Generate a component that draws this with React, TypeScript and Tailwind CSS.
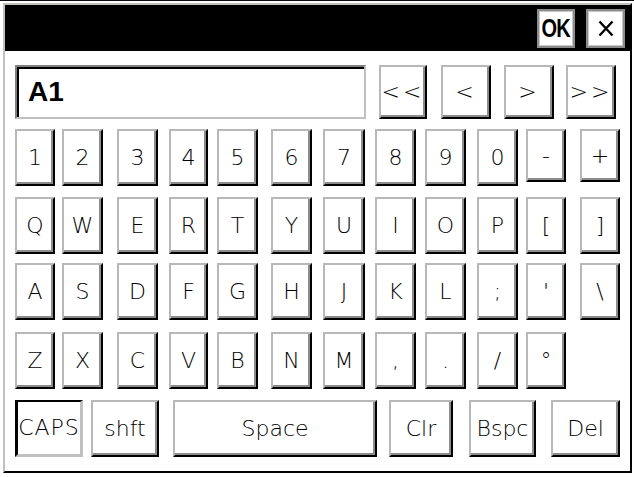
import React from "react";

const KEY_FONT = "font-['DejaVu_Sans',sans-serif] font-extralight text-[22px] leading-none text-black";

const RAISED =
  "flex items-center justify-center bg-white border-2 border-t-[#b8b8b8] border-l-[#b8b8b8] border-r-black border-b-black shadow-[inset_-2px_-2px_0_#8c8c8c]";

const PRESSED =
  "flex items-center justify-center bg-white border-t-2 border-l-[3px] border-b-[3px] border-r-[3px] border-t-black border-l-black border-b-[#c0c0c0] border-r-[#c0c0c0]";

const COLS = [
  { ml: "ml-0", w: "w-[40px]" },
  { ml: "ml-[7px]", w: "w-[41px]" },
  { ml: "ml-[14px]", w: "w-[41px]" },
  { ml: "ml-[11px]", w: "w-[39px]" },
  { ml: "ml-[9px]", w: "w-[41px]" },
  { ml: "ml-[13px]", w: "w-[41px]" },
  { ml: "ml-[11px]", w: "w-[42px]" },
  { ml: "ml-[10px]", w: "w-[41px]" },
  { ml: "ml-[9px]", w: "w-[41px]" },
  { ml: "ml-[11px]", w: "w-[41px]" },
  { ml: "ml-[8px]", w: "w-[40px]" },
  { ml: "ml-[14px]", w: "w-[40px]" },
];

const ROWS: { labels: string[]; mt: string }[] = [
  { labels: ["1", "2", "3", "4", "5", "6", "7", "8", "9", "0", "-", "+"], mt: "mt-[10px]" },
  { labels: ["Q", "W", "E", "R", "T", "Y", "U", "I", "O", "P", "[", "]"], mt: "mt-[11px]" },
  { labels: ["A", "S", "D", "F", "G", "H", "J", "K", "L", ";", "'", "\\"], mt: "mt-[9px]" },
  { labels: ["Z", "X", "C", "V", "B", "N", "M", ",", ".", "/", "°"], mt: "mt-[12px]" },
];

const NAV = [
  { label: "<<", ml: "ml-[13px]", w: "w-[48px]" },
  { label: "<", ml: "ml-[14px]", w: "w-[50px]" },
  { label: ">", ml: "ml-[13px]", w: "w-[50px]" },
  { label: ">>", ml: "ml-[12px]", w: "w-[50px]" },
];

const BOTTOM = [
  { label: "CAPS", ml: "ml-0", w: "w-[68px]", pressed: true },
  { label: "shft", ml: "ml-[8px]", w: "w-[68px]", pressed: false },
  { label: "Space", ml: "ml-[14px]", w: "w-[204px]", pressed: false },
  { label: "Clr", ml: "ml-[12px]", w: "w-[64px]", pressed: false },
  { label: "Bspc", ml: "ml-[16px]", w: "w-[67px]", pressed: false },
  { label: "Del", ml: "ml-[15px]", w: "w-[69px]", pressed: false },
];

export default function App() {
  return (
    <div className="w-[634px] h-[477px] bg-white border-t border-t-[#0d0d1a] pl-[3px] pt-[2px] pr-[2px] pb-[4px] flex">
      <div className="flex-1 flex flex-col border-t-2 border-l-2 border-t-[#c0c0c0] border-l-[#c0c0c0] border-r-2 border-b-2 border-r-black border-b-black">
        {/* Title bar */}
        <div className="h-[46px] bg-black flex items-center justify-end pr-[5px]">
          <div className="w-[38px] h-[39px] bg-white border-2 border-[#8c8c8c] shadow-[inset_0_0_0_1px_#c8c8c8] flex items-center justify-center">
            <span className="font-['Liberation_Sans',sans-serif] font-bold text-[25px] leading-none text-black scale-x-[0.8] tracking-[-1px]">OK</span>
          </div>
          <div className="ml-[11px] w-[39px] h-[39px] bg-white border-2 border-[#8c8c8c] shadow-[inset_0_0_0_1px_#c8c8c8] flex items-center justify-center">
            <svg width="16" height="17" viewBox="0 0 16 17">
              <path d="M1.5 1.5 L14.5 15.5 M14.5 1.5 L1.5 15.5" stroke="#000" strokeWidth="2.4" fill="none" />
            </svg>
          </div>
        </div>

        {/* Body */}
        <div className="flex-1 bg-white pl-[10px] flex flex-col">
          {/* Input + nav */}
          <div className="mt-[14px] flex h-[54px]">
            <div className="w-[351px] h-[54px] border-2 border-t-[#808080] border-l-[#808080] border-b-[#c0c0c0] border-r-[#c0c0c0] shadow-[inset_2px_2px_0_#000] flex items-center pl-[11px]">
              <span className="font-['Liberation_Sans',sans-serif] font-bold text-[28px] leading-none text-black">A1</span>
            </div>
            {NAV.map((n) => (
              <div key={n.label} className={`${n.ml} ${n.w} h-[54px] ${RAISED}`}>
                <span className={`${KEY_FONT} tracking-[3px]`}>{n.label}</span>
              </div>
            ))}
          </div>

          {ROWS.map((row, ri) => (
            <div key={ri} className={`${row.mt} flex h-[57px] items-start`}>
              {row.labels.map((label, ki) => {
                const short = ri === 0 && (label === "-" || label === "+");
                return (
                  <div
                    key={label}
                    className={`${COLS[ki].ml} ${COLS[ki].w} ${short ? "h-[53px]" : "h-[57px]"} ${RAISED}`}
                  >
                    <span className={KEY_FONT}>{label}</span>
                  </div>
                );
              })}
            </div>
          ))}

          {/* Bottom row */}
          <div className="mt-[11px] flex h-[57px]">
            {BOTTOM.map((b) => (
              <div key={b.label} className={`${b.ml} ${b.w} h-[57px] ${b.pressed ? PRESSED : RAISED}`}>
                <span className={`${KEY_FONT} ${b.pressed ? "tracking-[1px]" : ""}`}>{b.label}</span>
              </div>
            ))}
          </div>
        </div>
      </div>
    </div>
  );
}
